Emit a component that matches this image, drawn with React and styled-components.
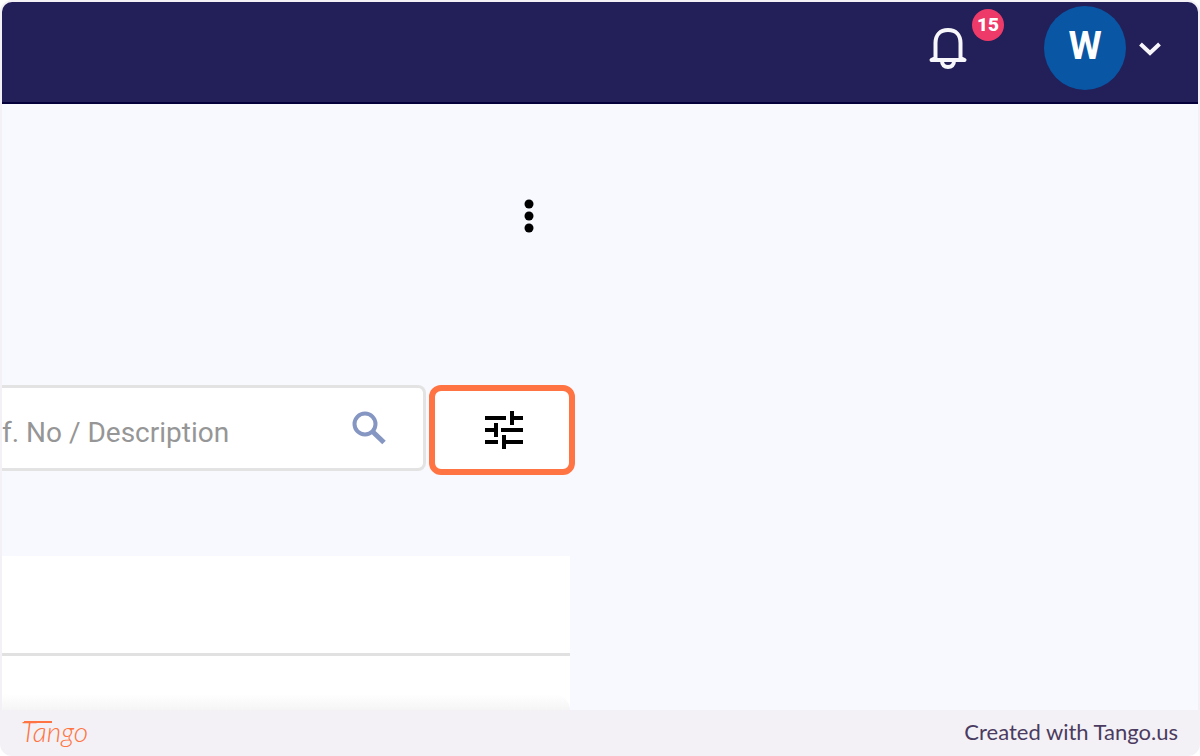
import styled, { createGlobalStyle } from "styled-components";

const GlobalStyle = createGlobalStyle`
  * {
    box-sizing: border-box;
  }

  body {
    margin: 0;
    background: #fff;
    font-family: Roboto, "Liberation Sans", sans-serif;
  }

  button {
    border: 0;
    padding: 0;
    background: transparent;
    font-family: inherit;
    cursor: pointer;
  }

  svg {
    display: block;
  }
`;

const Page = styled.div`
  display: flex;
  flex-direction: column;
  min-height: 100vh;
  padding: 2px 2px 0;
  border-radius: 12px;
  background: #f3f1f6;
  overflow: hidden;
`;

const Header = styled.header`
  display: flex;
  align-items: center;
  justify-content: flex-end;
  height: 102px;
  padding: 0 36px 8px 0;
  border-bottom: 2px solid #03003c;
  border-radius: 10px 10px 0 0;
  background: #231f58;
`;

const BellButton = styled.button`
  position: relative;
  width: 40px;
  height: 44px;
  margin-right: 76px;
`;

const Badge = styled.span`
  position: absolute;
  top: -17px;
  left: 44px;
  width: 32px;
  height: 32px;
  border-radius: 50%;
  background: #ee3a68;
  color: #fff;
  font-size: 19px;
  font-weight: 900;
  line-height: 32px;
  text-align: center;
`;

const Account = styled.button`
  display: flex;
  align-items: center;
  gap: 12px;
`;

const Avatar = styled.span`
  width: 82px;
  height: 84px;
  border-radius: 50%;
  background: #0956a4;
  color: #fff;
  font-size: 38px;
  font-weight: 700;
  line-height: 80px;
  text-align: center;
`;

const Main = styled.main`
  flex: 1;
  display: flex;
  flex-direction: column;
  background: #f8f9fe;
`;

const Column = styled.section`
  flex: 1;
  display: flex;
  flex-direction: column;
  width: 48%;
`;

const Actions = styled.div`
  display: flex;
  justify-content: flex-end;
  padding: 88px 35px 145px 0;
`;

const MenuButton = styled.button`
  display: grid;
  place-items: center;
  width: 24px;
  height: 48px;
`;

const Toolbar = styled.div`
  display: flex;
  align-items: flex-start;
  gap: 3px;
  padding-right: 1px;
`;

const SearchBox = styled.form`
  flex: 1;
  display: flex;
  align-items: center;
  min-width: 0;
  height: 86px;
  padding-right: 36px;
  border: 3px solid #e3e3e3;
  border-left: 0;
  border-radius: 0 8px 8px 0;
  background: #fff;
`;

const SearchInput = styled.input`
  flex: 1;
  min-width: 0;
  height: 60px;
  padding: 8px 0 0;
  border: 0;
  outline: 0;
  background: transparent;
  color: #333;
  font-family: inherit;
  font-size: 28px;

  &::placeholder {
    color: #969696;
    opacity: 1;
  }
`;

const FilterButton = styled.button`
  display: grid;
  place-items: center;
  width: 146px;
  height: 90px;
  padding-left: 4px;
  border: 6px solid #ff7442;
  border-radius: 12px;
  background: #fff;
`;

const Panel = styled.div`
  flex: 1;
  display: flex;
  flex-direction: column;
  margin: 81px 6px 0 0;
  background: #fff;
`;

const PanelHead = styled.div`
  height: 100px;
  border-bottom: 3px solid #e1e1e1;
`;

const PanelBody = styled.div`
  flex: 1;
  display: flex;
  align-items: flex-end;
`;

const PanelShade = styled.div`
  width: 100%;
  height: 16px;
  border-radius: 0 16px 0 0;
  background: linear-gradient(#fff, #f5f5f5);
`;

const Footer = styled.footer`
  display: flex;
  align-items: center;
  justify-content: space-between;
  height: 46px;
  padding: 0 20px 4px 19px;
`;

const Brand = styled.a`
  position: relative;
  color: #ff7442;
  font-family: Lato, sans-serif;
  font-size: 28px;
  font-style: italic;
  font-weight: 300;
  line-height: 36px;
  text-decoration: none;

  &::before {
    content: "";
    position: absolute;
    top: 8px;
    left: 3px;
    width: 28px;
    height: 2px;
    background: #ff7442;
  }
`;

const Credit = styled.a`
  color: #4b3b60;
  font-family: Lato, sans-serif;
  font-size: 22px;
  text-decoration: none;
`;

function BellIcon() {
  return (
    <svg width="40" height="44" viewBox="0 0 40 44" fill="none" stroke="#f6f6fb" strokeWidth="4" strokeLinejoin="round">
      <path d="M7.500 32V17C7.500 9 12 4 20 4S32.500 9 32.500 17V32l4 2H3.500Z" />
      <path d="M14 35c0 4 2.500 6 6 6s6-2 6-6" />
    </svg>
  );
}

function ChevronIcon() {
  return (
    <svg width="24" height="16" viewBox="0 0 24 16" fill="none" stroke="#f6f6fb" strokeWidth="4">
      <path d="M2.500 4l9.500 9 9.500-9" />
    </svg>
  );
}

function DotsIcon() {
  return (
    <svg width="12" height="36" viewBox="0 0 12 36">
      <circle cx="6" cy="6" r="4.500" />
      <circle cx="6" cy="18" r="4.500" />
      <circle cx="6" cy="30" r="4.500" />
    </svg>
  );
}

function SearchIcon() {
  return (
    <svg width="36" height="36" viewBox="0 0 36 36" fill="none" stroke="#8496c1">
      <circle cx="14" cy="14" r="10.500" strokeWidth="4" />
      <path d="M21.500 21.500l11.500 11" strokeWidth="5" />
    </svg>
  );
}

function TuneIcon() {
  return (
    <svg width="38" height="40" viewBox="0 0 38 40" stroke="#000" strokeWidth="4">
      <path d="M0 8h21M27 1v14M27 8h11M0 20h10M11 13v14M16 20h22M0 32h13M19 25v14M19 32h19" />
    </svg>
  );
}

export default function App() {
  return (
    <Page>
      <GlobalStyle />
      <Header>
        <BellButton aria-label="Notifications">
          <BellIcon />
          <Badge>15</Badge>
        </BellButton>
        <Account aria-label="Account">
          <Avatar>W</Avatar>
          <ChevronIcon />
        </Account>
      </Header>
      <Main>
        <Column>
          <Actions>
            <MenuButton aria-label="More options">
              <DotsIcon />
            </MenuButton>
          </Actions>
          <Toolbar>
            <SearchBox onSubmit={(e) => e.preventDefault()}>
              <SearchInput aria-label="Search" placeholder="f. No / Description" />
              <button aria-label="Submit search">
                <SearchIcon />
              </button>
            </SearchBox>
            <FilterButton type="button" aria-label="Filters">
              <TuneIcon />
            </FilterButton>
          </Toolbar>
          <Panel>
            <PanelHead />
            <PanelBody>
              <PanelShade />
            </PanelBody>
          </Panel>
        </Column>
      </Main>
      <Footer>
        <Brand href="#">Tango</Brand>
        <Credit href="#">Created with Tango.us</Credit>
      </Footer>
    </Page>
  );
}
